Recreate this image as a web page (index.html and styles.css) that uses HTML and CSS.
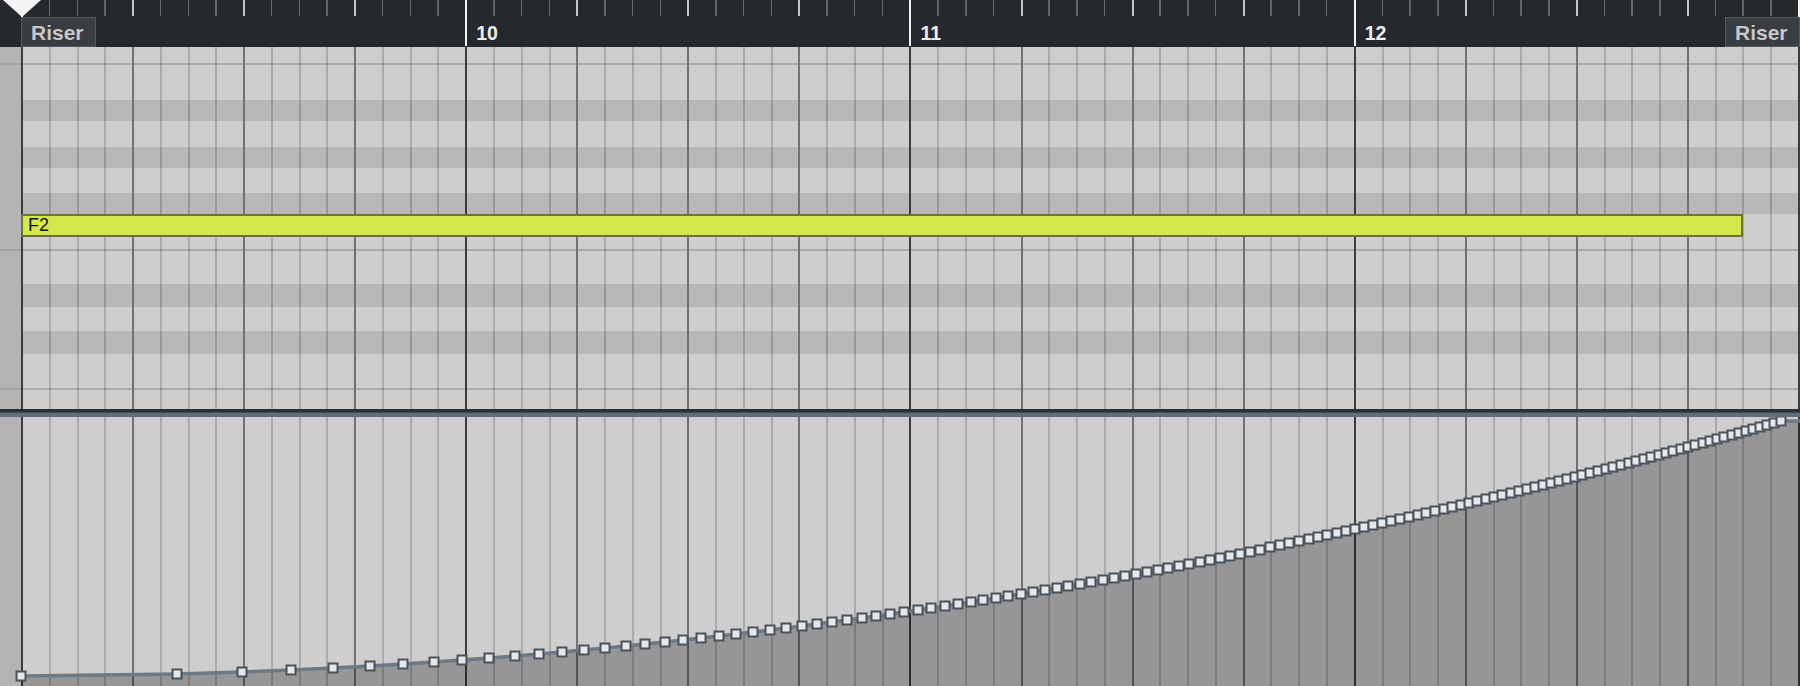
FILE: index.html
```html
<!DOCTYPE html>
<html lang="en">
<head>
<meta charset="utf-8">
<title>Key Editor – Riser</title>
<link rel="stylesheet" href="styles.css">
</head>
<body>
<div class="editor">
  <div class="ruler">
    <div class="ruler-strip"></div>
    <div class="timeline">
      <div class="bar"></div>
      <div class="bar"><span class="bar-num">10</span></div>
      <div class="bar"><span class="bar-num">11</span></div>
      <div class="bar"><span class="bar-num">12</span></div>
    </div>
    <div class="marker marker-start">Riser</div>
    <div class="marker marker-end">Riser</div>
    <svg class="playhead" viewBox="0 0 44 18" width="44" height="18"><polygon points="3,0 41,0 22,17" fill="#f4f4f4"/></svg>
  </div>

  <div class="roll">
    <div class="key-strip roll-strip"></div>
    <div class="lanes">
      <div class="key-row grid-lines white h16"></div>
      <div class="key-row grid-lines octave-line"></div>
      <div class="key-row grid-lines white h35"></div>
      <div class="key-row grid-lines black h21"></div>
      <div class="key-row grid-lines white h26"></div>
      <div class="key-row grid-lines black h21"></div>
      <div class="key-row grid-lines white h25"></div>
      <div class="key-row grid-lines black h21"></div>
      <div class="key-row grid-lines white h23"><div class="note">F2</div></div>
      <div class="key-row grid-lines white h12"></div>
      <div class="key-row grid-lines octave-line"></div>
      <div class="key-row grid-lines white h33"></div>
      <div class="key-row grid-lines black h23"></div>
      <div class="key-row grid-lines white h24"></div>
      <div class="key-row grid-lines black h23"></div>
      <div class="key-row grid-lines white h34"></div>
      <div class="key-row grid-lines octave-line"></div>
      <div class="key-row grid-lines white h19"></div>
    </div>
  </div>

  <div class="divider"></div>

  <div class="automation">
    <div class="key-strip"></div>
    <div class="auto-grid grid-lines"></div>
    <svg class="curve" id="curve" viewBox="0 417 1800 269" width="1800" height="269"></svg>
  </div>
</div>
<script src="script.js"></script>
</body>
</html>
```

FILE: styles.css
```css
html, body {
  margin: 0;
  padding: 0;
}
body {
  width: 1800px;
  height: 686px;
  overflow: hidden;
  background: #25282c;
  font-family: "Liberation Sans", Arial, sans-serif;
}
.editor {
  display: flex;
  flex-direction: column;
  width: 1800px;
  height: 686px;
}

/* ---------- ruler ---------- */
.ruler {
  position: relative;
  display: flex;
  flex: none;
  height: 47px;
  background: #25282c;
}
.ruler-strip {
  flex: none;
  width: 21px;
}
.timeline {
  flex: 1;
  display: flex;
  background-image:
    repeating-linear-gradient(90deg, #f2f2f2 0 2px, transparent 2px 444.25px),
    repeating-linear-gradient(90deg, #c3c5c8 0 2px, transparent 2px 111.0625px),
    repeating-linear-gradient(90deg, #63676c 0 1.5px, transparent 1.5px 27.765625px);
  background-size: 100% 46px, 100% 16px, 100% 16px;
  background-repeat: no-repeat;
}
.bar {
  flex: 0 0 444.25px;
  box-sizing: border-box;
  padding: 23px 0 0 11px;
}
.bar-num {
  display: block;
  font-size: 19.5px;
  line-height: 20px;
  font-weight: bold;
  color: #eeeeee;
}
.marker {
  position: absolute;
  top: 17px;
  width: 75px;
  height: 30px;
  box-sizing: border-box;
  border: 1px solid #55595e;
  background: #393c41;
  color: #c6c8ca;
  font-size: 21px;
  line-height: 21px;
  font-weight: bold;
  padding: 4px 0 0 9px;
}
.marker-start { left: 21px; }
.marker-end { right: 0; }
.playhead {
  position: absolute;
  left: 0;
  top: 0;
}

/* ---------- piano roll ---------- */
.roll {
  display: flex;
  flex: none;
  height: 362px;
}
.key-strip {
  flex: none;
  width: 21px;
  background-color: #b4b4b4;
}
.roll-strip {
  background-image: linear-gradient(to bottom,
    transparent 16px, #a4a4a4 16px 18px,
    transparent 18px 202px, #a4a4a4 202px 204px,
    transparent 204px 341px, #a4a4a4 341px 343px,
    transparent 343px);
}
.lanes {
  flex: 1;
  display: flex;
  flex-direction: column;
}
.grid-lines {
  background-image:
    repeating-linear-gradient(90deg, #3c3c3c 0 2px, transparent 2px 444.25px),
    repeating-linear-gradient(90deg, #727272 0 2px, transparent 2px 111.0625px),
    repeating-linear-gradient(90deg, rgba(0,0,0,0.17) 0 2px, transparent 2px 27.765625px);
}
.key-row { flex: none; }
.white { background-color: #cecece; }
.black { background-color: #b8b8b8; }
.octave-line { height: 2px; background-color: #aaaaaa; }
.h12 { height: 12px; }
.h16 { height: 16px; }
.h19 { height: 19px; }
.h21 { height: 21px; }
.h23 { height: 23px; }
.h24 { height: 24px; }
.h25 { height: 25px; }
.h26 { height: 26px; }
.h33 { height: 33px; }
.h34 { height: 34px; }
.h35 { height: 35px; }

.note {
  width: 1722px;
  height: 23px;
  box-sizing: border-box;
  background: #d5e84b;
  border: 2px solid #6c7232;
  padding-left: 5px;
  font-size: 18px;
  line-height: 19px;
  color: #151515;
}

/* ---------- divider ---------- */
.divider {
  flex: none;
  height: 8px;
  background: linear-gradient(to bottom, #2b2f33 0 3px, #434c55 3px 4px, #5e6e7d 4px);
}

/* ---------- automation ---------- */
.automation {
  position: relative;
  flex: 1;
  display: flex;
}
.auto-grid {
  flex: 1;
  background-color: #cecece;
}
.curve {
  position: absolute;
  left: 0;
  top: 0;
}
```

FILE: script.js
```js
(function () {
  var svg = document.getElementById('curve');
  var NS = 'http://www.w3.org/2000/svg';
  var pts = [];
  for (var k = 0; k <= 127; k++) {
    var x = Math.round(20.7 + 1760 * Math.sqrt(k / 127));
    var y = Math.round(676 - 255 * k / 127);
    pts.push([x, y]);
  }
  var last = pts[pts.length - 1];
  var line = [[21, pts[0][1]]].concat(pts.slice(1)).concat([[1800, last[1]]]);
  var d = 'M21 686 ' + line.map(function (p) { return 'L' + p[0] + ' ' + p[1]; }).join(' ') + ' L1800 686 Z';

  var fill = document.createElementNS(NS, 'path');
  fill.setAttribute('d', d);
  fill.setAttribute('fill', 'rgba(0,0,0,0.27)');
  svg.appendChild(fill);

  var pl = document.createElementNS(NS, 'polyline');
  pl.setAttribute('points', line.map(function (p) { return p[0] + ',' + p[1]; }).join(' '));
  pl.setAttribute('fill', 'none');
  pl.setAttribute('stroke', '#6d7985');
  pl.setAttribute('stroke-width', '3.5');
  svg.appendChild(pl);

  pts.forEach(function (p) {
    var r = document.createElementNS(NS, 'rect');
    r.setAttribute('x', p[0] - 4.5);
    r.setAttribute('y', p[1] - 4.5);
    r.setAttribute('width', 9);
    r.setAttribute('height', 9);
    r.setAttribute('fill', '#e5e7eb');
    r.setAttribute('stroke', '#4a525a');
    r.setAttribute('stroke-width', 2);
    svg.appendChild(r);
  });
})();
```
